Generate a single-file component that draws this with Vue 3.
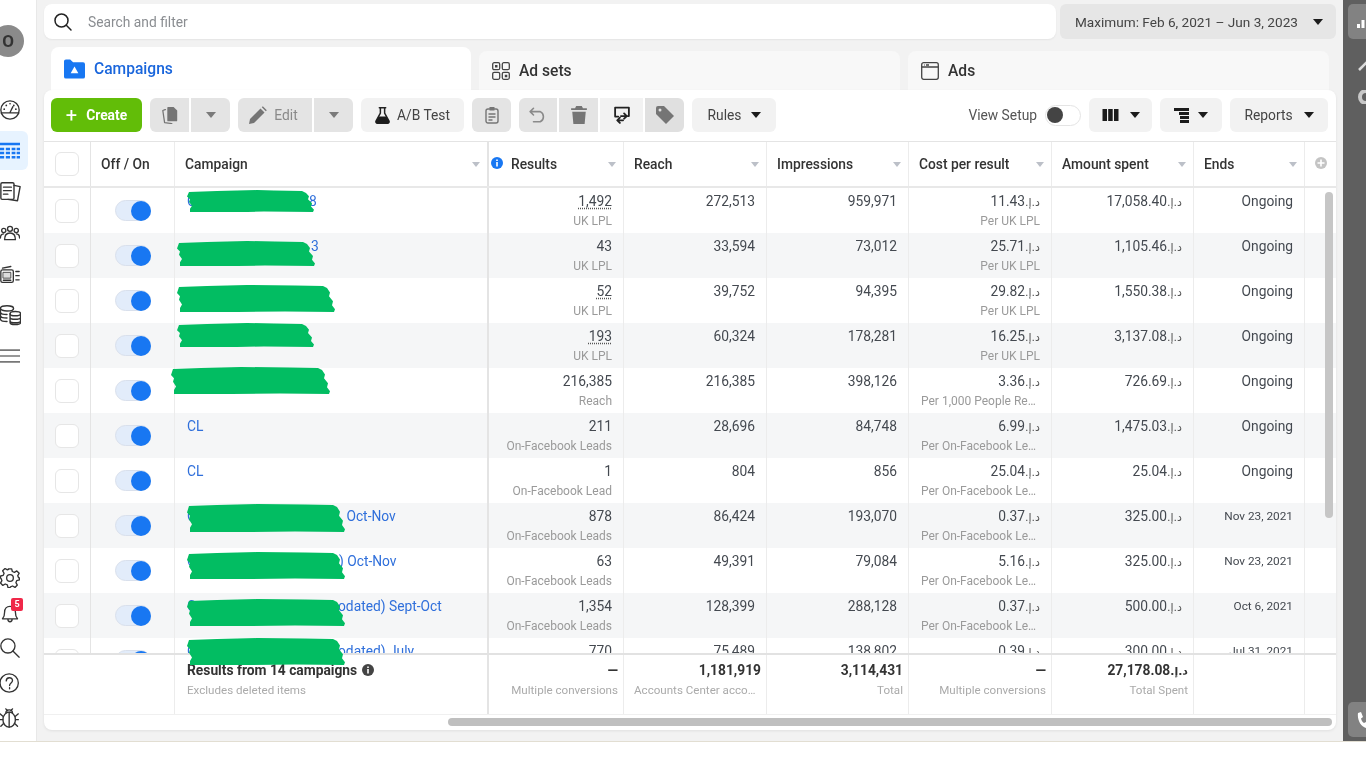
<script setup>
const rows = [
  { pre: 'C', gap: 113, post: '8', r: '1,492', dot: true, rs: 'UK LPL', reach: '272,513', imp: '959,971', c: '11.43', cs: 'Per UK LPL', a: '17,058.40', e: 'Ongoing' },
  { pre: '', gap: 124, post: '3', r: '43', rs: 'UK LPL', reach: '33,594', imp: '73,012', c: '25.71', cs: 'Per UK LPL', a: '1,105.46', e: 'Ongoing' },
  { pre: '', gap: 0, post: '', r: '52', dot: true, rs: 'UK LPL', reach: '39,752', imp: '94,395', c: '29.82', cs: 'Per UK LPL', a: '1,550.38', e: 'Ongoing' },
  { pre: '', gap: 0, post: '', r: '193', dot: true, rs: 'UK LPL', reach: '60,324', imp: '178,281', c: '16.25', cs: 'Per UK LPL', a: '3,137.08', e: 'Ongoing' },
  { pre: '', gap: 0, post: '', r: '216,385', rs: 'Reach', reach: '216,385', imp: '398,126', c: '3.36', cs: 'Per 1,000 People Reached', a: '726.69', e: 'Ongoing' },
  { pre: 'CL', gap: 0, post: '', r: '211', rs: 'On-Facebook Leads', reach: '28,696', imp: '84,748', c: '6.99', cs: 'Per On-Facebook Lead', a: '1,475.03', e: 'Ongoing' },
  { pre: 'CL', gap: 0, post: '', r: '1', rs: 'On-Facebook Lead', reach: '804', imp: '856', c: '25.04', cs: 'Per On-Facebook Lead', a: '25.04', e: 'Ongoing' },
  { pre: 'C', gap: 147, post: ' Oct-Nov', r: '878', rs: 'On-Facebook Leads', reach: '86,424', imp: '193,070', c: '0.37', cs: 'Per On-Facebook Lead', a: '325.00', e: 'Nov 23, 2021', date: true },
  { pre: 'C', gap: 143, post: ') Oct-Nov', r: '63', rs: 'On-Facebook Leads', reach: '49,391', imp: '79,084', c: '5.16', cs: 'Per On-Facebook Lead', a: '325.00', e: 'Nov 23, 2021', date: true },
  { pre: 'C', gap: 142, post: 'odated) Sept-Oct', r: '1,354', rs: 'On-Facebook Leads', reach: '128,399', imp: '288,128', c: '0.37', cs: 'Per On-Facebook Lead', a: '500.00', e: 'Oct 6, 2021', date: true },
  { pre: 'C', gap: 142, post: 'odated) July', r: '770', rs: '', reach: '75,489', imp: '138,802', c: '0.39', cs: '', a: '300.00', e: 'Jul 31, 2021', date: true },
]

const headers = ['Reach', 'Impressions', 'Cost per result', 'Amount spent', 'Ends']
const currency = 'د.إ.'

function scribble(L, T, R, B) {
  const h = B - T
  return [
    [L + 2, T + 2], [L + 30, T + 1], [L + 70, T], [R - 40, T + 0.5], [R - 12, T + 1], [R - 8, T + 3],
    [R - 5, T + h * 0.28], [R - 6, T + h * 0.42], [R - 2, T + h * 0.6], [R - 3, T + h * 0.75], [R, T + h * 0.9],
    [R - 1, B], [R - 50, B - 0.5], [L + 60, B], [L + 3, B], [L + 3, T + h * 0.85], [L + 5, T + h * 0.72],
    [L + 2, T + h * 0.55], [L + 3, T + h * 0.42], [L, T + h * 0.3],
  ].map((p) => p.join(',')).join(' ')
}

const scribbles = [
  [187, 189, 314, 211],
  [177, 240, 315, 265],
  [177, 284, 335, 311],
  [177, 322, 314, 346],
  [171, 366, 330, 393],
  [187, 503, 345, 531],
  [187, 551, 345, 578],
  [187, 598, 345, 625],
  [187, 637, 345, 664],
].map((s) => scribble(...s))
</script>

<template>
  <div class="screen">
    <aside class="rail">
      <div class="avatar"><span>O</span></div>
      <nav class="rail-top">
        <div class="slot">
          <svg class="ri" viewBox="0 0 24 24"><circle cx="12" cy="12" r="11" /><path d="M1.500 15.500h21M12 15l3.500-7" /><path class="dots" d="M5 11h.1M7.500 6.500h.1M12 4.500h.1M19 11h.1M16.500 6.500h.1" /></svg>
        </div>
        <div class="slot active">
          <svg class="ri" viewBox="0 0 24 24"><path class="blue" d="M0 2h24v3H0zM0 8h5v3H0zM7 8h5v3H7zM14 8h4.500v3H14zM20 8h4v3h-4zM0 13h5v3H0zM7 13h5v3H7zM14 13h4.500v3H14zM20 13h4v3h-4zM0 18h5v3H0zM7 18h5v3H7zM14 18h4.500v3H14zM20 18h4v3h-4z" /></svg>
        </div>
        <div class="slot">
          <svg class="ri tall" viewBox="0 0 24 24"><rect x="1" y="2" width="15" height="19" rx="1.500" /><path d="M4 7h9M4 11h9M4 15h5M16 5l7 1.500-3 16-11-1.500" /></svg>
        </div>
        <div class="slot">
          <svg class="ri" viewBox="0 0 24 24"><circle cx="12" cy="7" r="3" /><circle cx="4.500" cy="9" r="2.500" /><circle cx="19.500" cy="9" r="2.500" /><path d="M5.500 20c0-6 3-8 6.500-8s6.500 2 6.500 8zM.5 18c0-3 1.500-5 4-5M23.500 18c0-3-1.500-5-4-5" /></svg>
        </div>
        <div class="slot">
          <svg class="ri" viewBox="0 0 24 24"><path d="M3 5l10-2" /><rect x="1" y="7" width="15" height="15" rx="2" /><rect class="soft" x="4" y="10" width="9" height="7" /><path d="M19 9h4M19 14h4M19 19h4M4 19.500h9" /></svg>
        </div>
        <div class="slot">
          <svg class="ri tall" viewBox="0 0 24 24"><ellipse cx="8" cy="5" rx="7.500" ry="3" /><path d="M.5 5v12c0 1.700 3.400 3 7.500 3M.5 9c0 1.700 3.400 3 7.500 3M.5 13c0 1.700 3.400 3 7.500 3" /><ellipse cx="17.500" cy="11" rx="6" ry="2.500" /><path d="M11.500 11v10c0 1.400 2.700 2.500 6 2.500s6-1.100 6-2.500V11M11.500 15c0 1.400 2.700 2.500 6 2.500s6-1.100 6-2.500M11.500 19c0 1.400 2.700 2.500 6 2.500s6-1.100 6-2.500" /></svg>
        </div>
        <div class="slot">
          <svg class="ri menu" viewBox="0 0 24 24"><path d="M0 5h24M0 12h24M0 19h24" /></svg>
        </div>
      </nav>
      <nav class="rail-bottom">
        <div class="slot small">
          <svg class="ri" viewBox="0 0 24 24"><circle cx="12" cy="12" r="4" /><path d="M10 1h4l.8 3.200 2.500 1 2.900-1.700 2.800 2.800-1.700 2.900 1 2.500L23.500 12l-.2 2.300-3.200.8-1 2.500 1.700 2.900-2.800 2.800-2.900-1.700-2.500 1L12 23.500l-2.400-.1-.8-3.200-2.500-1-2.900 1.700-2.800-2.800 1.700-2.900-1-2.500L.5 12l.2-2.400 3.200-.8 1-2.500-1.700-2.900 2.800-2.800 2.900 1.700 1.300-.6z" /></svg>
        </div>
        <div class="slot small">
          <svg class="ri" viewBox="0 0 24 24"><path d="M3 19c2-2 2.500-4 2.500-8 0-4 2.500-7 6.500-7s6.500 3 6.500 7c0 4 .5 6 2.500 8zM9.500 19.500c0 4 5 4 5 0" /></svg>
          <span class="badge">5</span>
        </div>
        <div class="slot small">
          <svg class="ri" viewBox="0 0 24 24"><circle cx="9.500" cy="9.500" r="8.500" /><path d="M15.500 15.500L23 23" /></svg>
        </div>
        <div class="slot small">
          <svg class="ri" viewBox="0 0 24 24"><circle cx="11" cy="12" r="11" /><path d="M7.500 9.500c0-5 7.500-5 7.500-.5 0 3-3.500 3-3.500 6M11.500 17.500v1.500" /></svg>
        </div>
        <div class="slot small">
          <svg class="ri" viewBox="0 0 24 24"><ellipse cx="11" cy="14" rx="7.500" ry="9" /><path d="M11 5v18M7 6c0-5 8-5 8 0M7 1l2 2.500M15 1l-2 2.500M3.500 10L0 7M18.500 10L22 7M3.500 14H0M18.500 14H22M4 19l-3 3M18 19l3 3" /></svg>
        </div>
      </nav>
    </aside>

    <main class="main">
      <div class="top">
        <div class="search">
          <svg class="search-icon" viewBox="0 0 20 20"><circle cx="8.500" cy="8.500" r="6.500" /><path d="M13.300 13.300L18 18" /></svg>
          <span>Search and filter</span>
        </div>
        <div class="range">
          <span>Maximum: Feb 6, 2021 – Jun 3, 2023</span>
          <i class="caret"></i>
        </div>
      </div>

      <div class="tabs">
        <div class="tab on">
          <svg class="tab-folder" viewBox="0 0 22 20"><path d="M0 2a2 2 0 0 1 2-2h4.500l3 3H20a2 2 0 0 1 2 2v13a2 2 0 0 1-2 2H2a2 2 0 0 1-2-2z" /><path class="w" d="M11 7.500l4 7h-8z" /></svg>
          <span>Campaigns</span>
        </div>
        <div class="tab">
          <svg class="tab-icon" viewBox="0 0 18 18"><rect x=".7" y=".7" width="7" height="7" rx="1.500" /><rect x="10.300" y=".7" width="7" height="7" rx="1.500" /><rect x=".7" y="10.300" width="7" height="7" rx="1.500" /><rect x="10.300" y="10.300" width="7" height="7" rx="1.500" /><path class="fill" d="M3 3h2.500v2.500H3zM12.800 12.800h2.500v2.500h-2.500z" /></svg>
          <span>Ad sets</span>
        </div>
        <div class="tab">
          <svg class="tab-icon" viewBox="0 0 18 18"><rect x=".7" y=".7" width="16.600" height="16.600" rx="2" /><path d="M.7 5h16.600M3 3h.6M5 3h3" /></svg>
          <span>Ads</span>
        </div>
      </div>

      <section class="card">
        <div class="toolbar">
          <button class="btn create"><span class="plus">+</span>Create</button>
          <div class="group">
            <button class="btn dis w39">
              <svg class="ti" viewBox="0 0 18 20"><path class="f" d="M7 1h6l4 4v11a1 1 0 0 1-1 1H7a1 1 0 0 1-1-1V2a1 1 0 0 1 1-1z" /><path class="o" d="M4 4H3.500L1 5l2 13.500 8 1" /></svg>
            </button>
            <button class="btn dis w39"><i class="caret grey"></i></button>
          </div>
          <div class="group">
            <button class="btn dis edit">
              <svg class="ti" viewBox="0 0 18 18"><path class="f" d="M0 18l1-5L11.500 2.500l4 4L5 17zM12.800 1.200l1-1 4 4-1 1z" /></svg>
              <span>Edit</span>
            </button>
            <button class="btn dis w39"><i class="caret grey"></i></button>
          </div>
          <button class="btn ab">
            <svg class="ti flask" viewBox="0 0 14 16"><path class="o dark" d="M4 .7h6M5 .7v5L1 13c-.6 1.200.2 2.300 1.300 2.300h9.400c1.100 0 1.900-1.100 1.300-2.300L9 5.700v-5" /><path class="k" d="M3.400 9h7.200l2.600 4.500c.4 1-.3 2-1.300 2H2.100c-1 0-1.700-1-1.300-2z" /></svg>
            <span>A/B Test</span>
          </button>
          <button class="btn dis w39">
            <svg class="ti" viewBox="0 0 14 18"><rect class="o" x="1" y="3" width="12" height="14" rx="2" /><path class="o" d="M4 8h6M4 11h6M4 14h3" /><path class="f" d="M4.500 1h5v3.500h-5z" /></svg>
          </button>
          <div class="group">
            <button class="btn dis w38">
              <svg class="ti" viewBox="0 0 16 14"><path class="o light" d="M1 4h9a5 5 0 0 1 0 9H4M4 1L1 4l3 3" /></svg>
            </button>
            <button class="btn dis w39">
              <svg class="ti" viewBox="0 0 14 16"><path class="f" d="M4.500 0h5l1 2H14v1.500H0V2h3.500zM1 5h12l-1 11H2z" /></svg>
            </button>
            <button class="btn lite w43">
              <svg class="ti" viewBox="0 0 16 17"><path class="o dark thickline" d="M4.500 10H1.500V1.500h13V9.500h-1" /><path class="o dark thickline" d="M3.500 13.500H9M6 11l-2.500 2.500L6 16M12.500 9.500H7M10 7l2.500 2.500L10 12" /></svg>
            </button>
            <button class="btn tag w39">
              <svg class="ti" viewBox="0 0 18 18"><path class="f" d="M0 2a2 2 0 0 1 2-2h6l10 10-8 8L0 8z" /><circle class="hole" cx="4" cy="4" r="1.500" /></svg>
            </button>
          </div>
          <button class="btn lite rules"><span>Rules</span><i class="caret"></i></button>

          <div class="right">
            <span class="view">View Setup</span>
            <span class="switch"><i></i></span>
            <button class="btn lite icon-menu">
              <svg class="bars" viewBox="0 0 16 12"><path d="M0 0h4.500v12H0zM5.700 0h4.500v12H5.700zM11.500 0H16v12h-4.500z" /></svg>
              <i class="caret"></i>
            </button>
            <button class="btn lite icon-menu step">
              <svg class="bars stepped" viewBox="0 0 15 15"><path d="M0 0h15v3H0zM5 4h10v3H5zM6 8h9v3H6zM6 12h9v3H6z" /></svg>
              <i class="caret"></i>
            </button>
            <button class="btn lite reports"><span>Reports</span><i class="caret"></i></button>
          </div>
        </div>

        <div class="table">
          <div class="row head cols">
            <div class="c chk"><i class="box"></i></div>
            <div class="c h">Off / On</div>
            <div class="c h thick between"><span>Campaign</span><i class="sort"></i></div>
            <div class="c h between">
              <span class="res"><svg class="info" viewBox="0 0 12 12"><circle cx="6" cy="6" r="6" /><path d="M5.200 5h1.600v4.500H5.200zM5.200 2.500h1.600V4H5.200z" /></svg>Results</span>
              <i class="sort"></i>
            </div>
            <div v-for="h in headers" :key="h" class="c h between"><span>{{ h }}</span><i class="sort"></i></div>
            <div class="c add"><svg viewBox="0 0 12 12"><circle cx="6" cy="6" r="6" /><path d="M5.200 2.500h1.600v2.700h2.700v1.600H6.800v2.700H5.200V6.800H2.500V5.200h2.700z" /></svg></div>
          </div>

          <div class="body">
            <div v-for="(r, i) in rows" :key="i" class="row cols" :class="{ alt: i % 2 === 1 }">
              <div class="c chk"><i class="box"></i></div>
              <div class="c tog"><span class="toggle"><i></i></span></div>
              <div class="c name thick">{{ r.pre }}<span class="gap" :style="{ width: r.gap + 'px' }"></span>{{ r.post }}</div>
              <div class="c num"><div class="m"><span :class="{ dotted: r.dot }">{{ r.r }}</span></div><div v-if="r.rs" class="s">{{ r.rs }}</div></div>
              <div class="c num"><div class="m">{{ r.reach }}</div></div>
              <div class="c num"><div class="m">{{ r.imp }}</div></div>
              <div class="c num"><div class="m">{{ r.c }}<bdi dir="rtl" class="cur">{{ currency }}</bdi></div><div v-if="r.cs" class="s">{{ r.cs }}</div></div>
              <div class="c num"><div class="m">{{ r.a }}<bdi dir="rtl" class="cur">{{ currency }}</bdi></div></div>
              <div class="c num"><div class="m" :class="{ 'end-date': r.date }">{{ r.e }}</div></div>
              <div class="c"></div>
            </div>
            <i class="vthumb"></i>
          </div>

          <div class="foot cols">
            <div class="c plain"></div>
            <div class="c plain"></div>
            <div class="c thick ftitle">
              <div class="m b">Results from 14 campaigns <svg class="finfo" viewBox="0 0 12 12"><circle cx="6" cy="6" r="6" /><path d="M5.200 5h1.600v4.500H5.200zM5.200 2.500h1.600V4H5.200z" /></svg></div>
              <div class="s">Excludes deleted items</div>
            </div>
            <div class="c fnum"><div class="m b">—</div><div class="s">Multiple conversions</div></div>
            <div class="c fnum"><div class="m b">1,181,919</div><div class="s left">Accounts Center accounts</div></div>
            <div class="c fnum"><div class="m b">3,114,431</div><div class="s">Total</div></div>
            <div class="c fnum"><div class="m b">—</div><div class="s">Multiple conversions</div></div>
            <div class="c fnum"><div class="m b">27,178.08<bdi dir="rtl" class="cur">{{ currency }}</bdi></div><div class="s">Total Spent</div></div>
            <div class="c fnum"></div>
            <div class="c plain"></div>
          </div>

          <svg class="marks" viewBox="44 141 1292 574">
            <polygon v-for="(p, i) in scribbles" :key="i" :points="p" />
          </svg>
        </div>

        <div class="hbar"><i></i></div>
      </section>
    </main>

    <aside class="dock">
      <div class="dock-btn">
        <svg viewBox="0 0 12 12"><path d="M0 8h3v4H0zM4.500 4h3v8h-3zM9 0h3v12H9z" /></svg>
      </div>
      <svg class="dock-pen" viewBox="0 0 10 12"><path d="M1 11L10 2" /></svg>
      <svg class="dock-ring" viewBox="0 0 12 14"><circle cx="9" cy="7" r="6" /></svg>
      <div class="dock-btn phone">
        <svg viewBox="0 0 12 16"><path d="M1 1l3-1 2 5-2 1.500c.5 2 1.500 3.500 3 4.500L9 10l3 4-2.500 2C4 15 0 8 1 1z" /></svg>
      </div>
    </aside>
  </div>
</template>

<style>
html, body { background: #fff; }
</style>

<style scoped>
.screen {
  display: flex;
  height: 742px;
  box-sizing: border-box;
  border-bottom: 1px solid #e2ded2;
  font-family: Roboto, "Liberation Sans", sans-serif;
  font-size: 13.8px;
  color: #444950;
  overflow: hidden;
  filter: blur(0.4px);
}
.rail {
  width: 36px;
  flex: none;
  background: #fff;
  display: flex;
  flex-direction: column;
  padding: 25px 0 6px;
  box-sizing: border-box;
  overflow: hidden;
}
.avatar {
  width: 32px;
  height: 32px;
  margin-left: -8px;
  border-radius: 50%;
  background: #8a8a8a;
  display: flex;
  align-items: center;
  justify-content: center;
  font-weight: 700;
  font-size: 17px;
  color: #333;
  flex: none;
}
.rail-top { margin-top: 32px; }
.rail-bottom { margin-top: auto; }
.slot {
  position: relative;
  height: 41px;
  width: 28px;
  display: flex;
  align-items: center;
  justify-content: center;
  border-radius: 0 6px 6px 0;
  box-sizing: border-box;
  padding-right: 8px;
  overflow: visible;
}
.slot.small { height: 35px; }
.slot.active { background: #e7f3ff; height: 39px; margin: 1px 0; }
.ri {
  width: 20px;
  height: 20px;
  flex: none;
  fill: none;
  stroke: #333;
  stroke-width: 1.6;
  stroke-linecap: round;
  stroke-linejoin: round;
}
.ri.tall { height: 23px; width: 21px; }
.ri.menu { stroke: #777; stroke-width: 2; }
.ri .blue { fill: #1877f2; stroke: none; }
.ri .dots { stroke-width: 2; }
.ri .soft { fill: #ddd; stroke-width: 1; }
.badge {
  position: absolute;
  left: 11px;
  top: 3px;
  width: 12px;
  height: 13px;
  border-radius: 2px;
  background: #f02849;
  color: #fff;
  font-size: 9px;
  font-weight: 700;
  line-height: 13px;
  text-align: center;
}

.main {
  flex: 1;
  min-width: 0;
  background: #f2f2f2;
  border-left: 1px solid #e8e8e8;
  padding: 4px 7px 11px 7px;
  display: flex;
  flex-direction: column;
}
.top { display: flex; gap: 4px; height: 35px; flex: none; }
.search {
  flex: 1;
  background: #fff;
  border-radius: 8px;
  display: flex;
  align-items: center;
  padding-left: 9px;
  gap: 15px;
  color: #8a8d91;
  box-shadow: 0 1px 2px rgba(0, 0, 0, .06);
}
.search-icon { width: 20px; height: 20px; fill: none; stroke: #222; stroke-width: 1.5; stroke-linecap: round; }
.range {
  width: 276px;
  box-sizing: border-box;
  background: #e6e6e6;
  border-radius: 6px;
  display: flex;
  align-items: center;
  justify-content: space-between;
  padding: 0 13px 0 15px;
  color: #444;
  font-size: 13.6px;
}
.caret {
  display: inline-block;
  width: 0;
  height: 0;
  border-left: 5px solid transparent;
  border-right: 5px solid transparent;
  border-top: 6px solid #1c1c1c;
  flex: none;
}
.caret.grey { border-top-color: #7a7a7a; }

.tabs {
  display: flex;
  align-items: flex-end;
  gap: 8px;
  height: 43px;
  margin-top: 8px;
  padding-left: 7px;
  flex: none;
}
.tab {
  width: 421px;
  height: 39px;
  box-sizing: border-box;
  background: #f8f8f8;
  border-radius: 8px 8px 0 0;
  display: flex;
  align-items: center;
  padding-left: 13px;
  gap: 9px;
  font-weight: 500;
  font-size: 15.6px;
  color: #333;
}
.tab.on {
  width: 420px;
  height: 43px;
  background: #fff;
  color: #1a66dc;
}
.tab-folder { width: 21px; height: 20px; fill: #1877f2; }
.tab-folder .w { fill: #fff; }
.tab-icon { width: 18px; height: 18px; fill: none; stroke: #444; stroke-width: 1.3; }
.tab-icon .fill { fill: #444; stroke: none; }

.card {
  flex: 1;
  min-height: 0;
  background: #fff;
  border-radius: 8px;
  display: flex;
  flex-direction: column;
  box-shadow: 0 1px 3px rgba(0, 0, 0, .08);
}
.toolbar {
  display: flex;
  align-items: center;
  gap: 8px;
  height: 51px;
  flex: none;
  box-sizing: border-box;
  padding: 0 8px 1px 7px;
}
.group { display: flex; gap: 2px; }
.btn {
  height: 34px;
  border: 0;
  padding: 0;
  font: inherit;
  border-radius: 6px;
  display: flex;
  align-items: center;
  justify-content: center;
  flex: none;
  color: #444;
}
.group .btn { border-radius: 0; }
.group .btn:first-child { border-radius: 6px 0 0 6px; }
.group .btn:last-child { border-radius: 0 6px 6px 0; }
.create {
  width: 91px;
  background: #62bd08;
  color: #fff;
  font-weight: 700;
  gap: 9px;
}
.plus { font-size: 20px; font-weight: 400; line-height: 20px; }
.dis { background: #e4e4e4; color: #8a8a8a; }
.lite { background: #f2f2f2; }
.tag { background: #e0e0e0; }
.w38 { width: 38px; }
.w39 { width: 39px; }
.w43 { width: 43px; }
.edit { width: 74px; gap: 7px; padding-right: 3px; box-sizing: border-box; }
.ab { width: 103px; background: #f2f2f2; gap: 7px; }
.rules { width: 84px; gap: 10px; padding-left: 1px; box-sizing: border-box; }
.ti { width: 18px; height: 18px; flex: none; }
.ti.flask { width: 15px; height: 17px; }
.ti .f { fill: #757575; }
.ti .k { fill: #1c1c1c; }
.ti .o { fill: none; stroke: #757575; stroke-width: 1.4; stroke-linecap: round; stroke-linejoin: round; }
.ti .o.light { stroke: #8a8a8a; }
.ti .o.dark { stroke: #222; }
.ti .o.thickline { stroke-width: 1.7; }
.ti .hole { fill: #e0e0e0; }
.right { margin-left: auto; display: flex; align-items: center; gap: 8px; }
.view { color: #555; }
.switch {
  width: 36px;
  height: 21px;
  box-sizing: border-box;
  border: 1px solid #e4e4e4;
  border-radius: 11px;
  background: #fff;
  display: flex;
  align-items: center;
  padding-left: 1px;
}
.switch i { width: 16px; height: 16px; border-radius: 50%; background: #444; }
.icon-menu { width: 63px; gap: 11px; }
.icon-menu.step { width: 62px; gap: 9px; }
.bars { width: 17px; height: 12px; fill: #1c1c1c; }
.bars.stepped { width: 15px; height: 15px; }
.reports { width: 98px; gap: 11px; }

.table { position: relative; flex: none; border-top: 1px solid #e4e4e4; }
.cols {
  display: grid;
  grid-template-columns: 47px 84px 314px 135px 143px 142px 143px 142px 111px 31px;
}
.head { height: 44px; border-bottom: 2px solid #e8e8e8; }
.c { box-sizing: border-box; border-right: 1px solid #ececec; min-width: 0; }
.c:last-child { border-right: 0; }
.c.thick { border-right: 2px solid #e4e4e4; }
.h {
  display: flex;
  align-items: center;
  padding: 0 7px 0 10px;
  font-weight: 500;
  color: #333;
}
.between { justify-content: space-between; }
.chk { display: flex; align-items: center; justify-content: center; padding-right: 1px; border-right: 1px solid #e4e4e4; }
.box {
  width: 24px;
  height: 24px;
  box-sizing: border-box;
  border: 1px solid #e6e6e6;
  border-radius: 6px;
  background: #fff;
  display: block;
}
.sort {
  width: 0;
  height: 0;
  border-left: 4.5px solid transparent;
  border-right: 4.5px solid transparent;
  border-top: 5px solid #bcc0c8;
}
.res { display: flex; align-items: center; gap: 8px; margin-left: -8px; }
.info { width: 12px; height: 12px; margin-top: -3px; }
.info circle { fill: #1877f2; }
.info path { fill: #fff; }
.add { display: flex; align-items: center; justify-content: center; }
.add svg { width: 12px; height: 12px; margin-top: -2px; }
.add circle { fill: #c4c4c4; }
.add path { fill: #fff; }

.body { position: relative; height: 465px; overflow: hidden; }
.body .row { height: 45px; background: #fff; }
.body .row.alt { background: #f5f6f7; }
.tog { display: flex; align-items: center; justify-content: center; }
.toggle {
  width: 36px;
  height: 21px;
  box-sizing: border-box;
  border-radius: 11px;
  background: #e2ecfa;
  border: 1px solid #d9e0ec;
  display: flex;
  justify-content: flex-end;
  align-items: center;
}
.toggle i { width: 20px; height: 20px; border-radius: 50%; background: #1877f2; margin-right: -1px; }
.name {
  padding: 5px 0 0 12px;
  line-height: 16px;
  color: #2f6fdb;
  white-space: pre;
}
.gap { display: inline-block; }
.num { padding: 5px 11px 0 12px; text-align: right; }
.m { height: 16px; line-height: 16px; white-space: nowrap; }
.m.end-date { font-size: 11.8px; }
.s {
  margin-top: 4px;
  font-size: 12px;
  line-height: 16px;
  color: #9a9a9a;
  white-space: nowrap;
  overflow: hidden;
  text-overflow: ellipsis;
}
.dotted { text-decoration: underline dotted #555; text-underline-offset: 2px; }
.cur { font-family: "DejaVu Sans", sans-serif; font-size: 11px; line-height: 1; color: #555; }
.vthumb {
  position: absolute;
  top: 4px;
  left: 1281px;
  width: 8px;
  height: 326px;
  border-radius: 4px;
  background: #c6c6c6;
}
.foot {
  position: relative;
  height: 62px;
  box-sizing: border-box;
  background: #fff;
  border-top: 2px solid #e2e2e2;
  border-bottom: 1px solid #f0f0f0;
}
.foot .c { padding-top: 7px; }
.foot .plain { border-right: 0; }
.foot .c.plain:nth-child(2) { border-right: 1px solid #ececec; }
.ftitle { padding-left: 12px; }
.fnum { padding-right: 5px; padding-left: 10px; text-align: right; }
.b { font-weight: 700; color: #333; }
.foot .s { margin-top: 4px; font-size: 11.6px; color: #aaa; }
.foot .s.left { text-align: left; }
.foot .cur { font-size: 11px; color: #333; }
.finfo { width: 12px; height: 12px; vertical-align: -1px; margin-left: 1px; }
.finfo circle { fill: #444; }
.finfo path { fill: #fff; }
.marks {
  position: absolute;
  left: 0;
  top: 0;
  width: 1292px;
  height: 574px;
  pointer-events: none;
}
.marks polygon { fill: #02bd62; }
.hbar { padding: 3px 4px 0 404px; flex: none; }
.hbar i { display: block; height: 8px; border-radius: 4px; background: #bfbfbf; }

.dock {
  width: 23px;
  flex: none;
  box-sizing: border-box;
  background: #5f5f5f;
  padding: 4px 0 4px 5px;
  display: flex;
  flex-direction: column;
  overflow: hidden;
}
.dock-btn {
  height: 35px;
  width: 30px;
  flex: none;
  border-radius: 5px;
  background: #828282;
  display: flex;
  align-items: center;
  padding-left: 9px;
  box-sizing: border-box;
}
.dock-btn svg { width: 12px; height: 12px; fill: #fff; flex: none; }
.dock-btn.phone { margin-top: auto; }
.dock-btn.phone svg { height: 16px; }
.dock-pen { width: 10px; height: 12px; margin: 20px 0 0 10px; fill: none; stroke: #dcdcdc; stroke-width: 2.5; flex: none; }
.dock-ring { width: 12px; height: 14px; margin: 19px 0 0 9px; fill: none; stroke: #c8c8c8; stroke-width: 4; flex: none; }
</style>
